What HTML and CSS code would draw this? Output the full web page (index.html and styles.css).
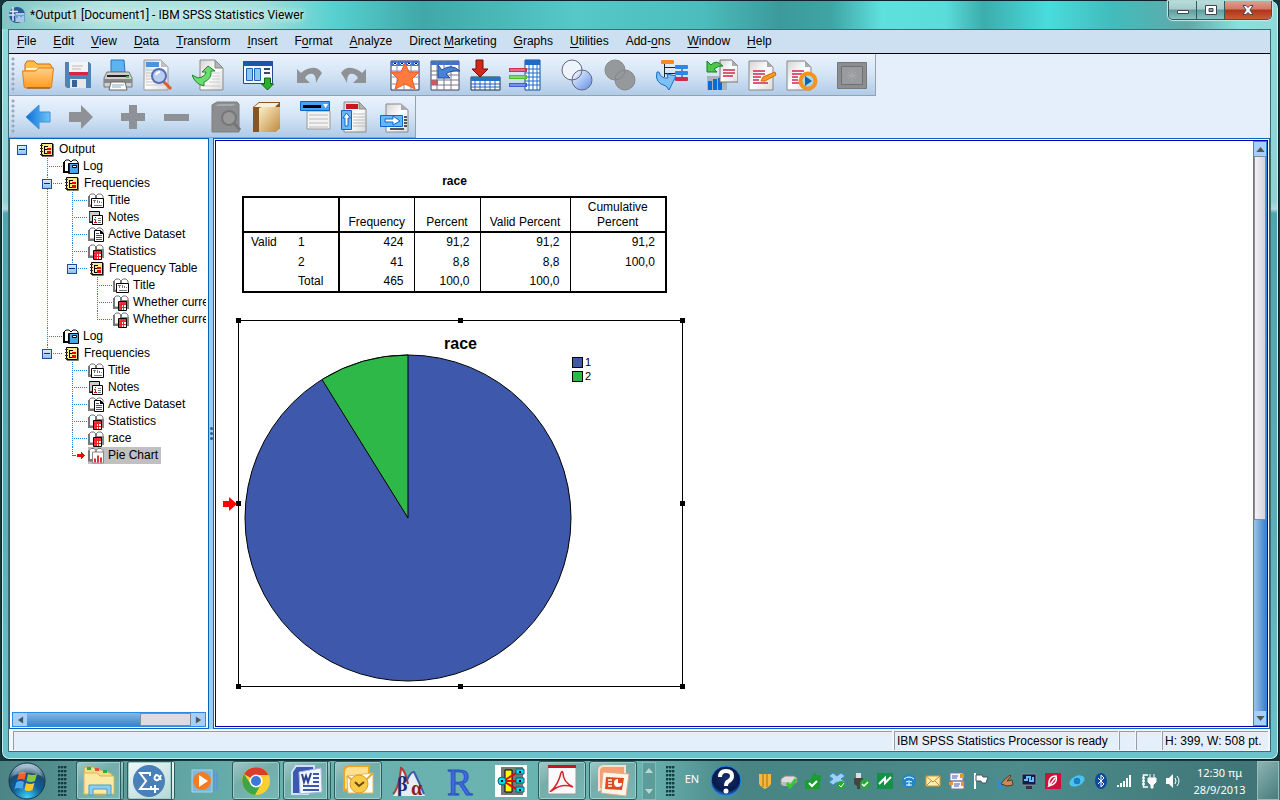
FILE: index.html
```html
<!DOCTYPE html>
<html lang="en">
<head>
    <meta charset="UTF-8">
    <meta name="viewport" content="width=device-width, initial-scale=1.0">
    <title>*Output1 [Document1] - IBM SPSS Statistics Viewer</title>
    <link rel="stylesheet" href="styles.css">
</head>
<body>
    <!-- shared gradients and outline icons -->
    <svg class="defs" width="0" height="0" aria-hidden="true">
        <defs>
            <linearGradient id="gOrange" x1="0" y1="0" x2="0" y2="1"><stop offset="0" stop-color="#ffd08a"/><stop offset="1" stop-color="#ff9a1e"/></linearGradient>
            <linearGradient id="gBlue" x1="0" y1="0" x2="1" y2="0"><stop offset="0" stop-color="#0a6fd8"/><stop offset="1" stop-color="#6fc4f5"/></linearGradient>
            <linearGradient id="gPage" x1="0" y1="0" x2="1" y2="1"><stop offset="0" stop-color="#d4d4d4"/><stop offset="0.5" stop-color="#fff"/><stop offset="1" stop-color="#d8d8d8"/></linearGradient>
            <linearGradient id="gLens" x1="0" y1="0" x2="1" y2="1"><stop offset="0" stop-color="#fff"/><stop offset="1" stop-color="#4f86e8"/></linearGradient>
            <linearGradient id="gBook" x1="0" y1="0" x2="1" y2="1"><stop offset="0" stop-color="#fbeec8"/><stop offset="1" stop-color="#c08a3c"/></linearGradient>
            <radialGradient id="gOrb" cx="0.5" cy="0.95" r="0.9"><stop offset="0" stop-color="#3fd0f8"/><stop offset="0.45" stop-color="#0f5f9a"/><stop offset="0.75" stop-color="#1a4a70"/><stop offset="1" stop-color="#a8c4d4"/></radialGradient>
            <radialGradient id="gHelp" cx="0.5" cy="0.4" r="0.6"><stop offset="0" stop-color="#16306a"/><stop offset="0.75" stop-color="#071a4a"/><stop offset="1" stop-color="#2a8ae8"/></radialGradient>
        </defs>
        <symbol id="page" viewBox="0 0 32 32">
            <path d="M5 1h15l7 7v23H5z" fill="url(#gPage)" stroke="#8a8a8a"/>
            <path d="M20 1v7h7z" fill="#b4b4b4" stroke="#8a8a8a"/>
        </symbol>
        <symbol id="t-out" viewBox="0 0 16 16">
            <path d="M2.500 1.500h11v12h-11z" fill="#ffe98a" stroke="#000"/>
            <path d="M14.500 2v12.500H3" stroke="#777" fill="none"/>
            <path d="M1 3.500h3M1 6.500h3M1 9.500h3M1 12.500h3" stroke="#333"/>
            <path d="M5 4h4v1H6v2h3v1H6v3h3v1H5z" fill="#000"/>
            <path d="M8 6h4v2H8zM8 9h4v3H8z" fill="#e00"/>
        </symbol>
        <symbol id="t-log" viewBox="0 0 16 16">
            <path d="M1 12V3l2-2h3l2 2 2-2h3l2 2v2" fill="#fff" stroke="#000"/>
            <path d="M1 3v10h4" stroke="#000" fill="none" stroke-width="2"/>
            <path d="M5.500 4.500h10v10h-10z" fill="#46a7e0" stroke="#000"/>
            <path d="M6 5h1v10H6z" fill="#125"/>
            <path d="M9.500 6.500h4v2h-4z" fill="#fff" stroke="#000"/>
        </symbol>
        <symbol id="book" viewBox="0 0 16 16">
            <path d="M1 12V3l2-2h3l2 2 2-2h3l2 2v9z" fill="#fff" stroke="#777"/>
            <path d="M1 3v10h5M8 3v5" stroke="#777" fill="none" stroke-width="2"/>
        </symbol>
        <symbol id="t-title" viewBox="0 0 16 16">
            <use href="#book" width="16" height="16"/>
            <path d="M3.500 5.500h12v9h-12z" fill="#fff" stroke="#000"/>
            <path d="M5 7.500h3M6.500 7v3M9.500 7v3M11.500 8v2M13 9.500h1M6 12.500h8" stroke="#777"/>
        </symbol>
        <symbol id="t-notes" viewBox="0 0 16 16">
            <path d="M1.500 1.500h10v11h-10z" fill="#ccc" stroke="#000"/>
            <path d="M1.500 2v10M1 11.500h4" stroke="#d00"/>
            <path d="M4.500 5.500h10v9h-10z" fill="#fff" stroke="#000"/>
            <path d="M7 7.500h1M6 9.500h1.500v3M6 12.500h3" stroke="#e00" fill="none"/>
            <path d="M10 8.500h3M10 10.500h3M10 12.500h3" stroke="#777"/>
        </symbol>
        <symbol id="t-data" viewBox="0 0 16 16">
            <use href="#book" width="16" height="16"/>
            <path d="M6.500 3.500h6l3 3v8h-9z" fill="#fff" stroke="#000"/>
            <path d="M12 3v4h4z" fill="#000"/>
            <path d="M8 6.500h3M8 8.500h6M8 10.500h6M8 12.500h6" stroke="#555"/>
        </symbol>
        <symbol id="t-stat" viewBox="0 0 16 16">
            <use href="#book" width="16" height="16"/>
            <path d="M9 5h7v9H9z" fill="#888"/>
            <path d="M5.500 6.500h8v9h-8z" fill="#fff" stroke="#000"/>
            <path d="M6 7h7v2H6zM6 7h2v8H6z" fill="#f33"/>
            <path d="M8.500 7v8M10.500 7v8M6 9.500h7M6 12.500h7" stroke="#e22"/>
        </symbol>
        <symbol id="t-pie" viewBox="0 0 16 16">
            <use href="#book" width="16" height="16"/>
            <path d="M4.500 4.500h11v11h-11z" fill="#fff" stroke="#888"/>
            <path d="M7 11v4M10 8v7M13 10v5" stroke="#d33" stroke-width="2"/>
        </symbol>
    </svg>

    <div class="window">
        <header class="titlebar">
            <svg class="app-icon" viewBox="0 0 16 16">
                <circle cx="8" cy="8" r="8" fill="#2a5a9c"/>
                <path d="M1 4.500h8M4 0v14M0 8h8" stroke="#dfe8f4" stroke-width="1.500"/>
                <path d="M6 6h10v9H6z" fill="#6f9ed4"/>
                <path d="M7 7h8M8 15v-4M10 15v-6M12 15v-5M14 15V9" stroke="#e8f0fa"/>
            </svg>
            <h1 class="title">*Output1 [Document1] - IBM SPSS Statistics Viewer</h1>
            <div class="captions">
                <button class="cap" aria-label="Minimize"><svg viewBox="0 0 14 12"><path d="M1.500 6.500h11v3h-11z" fill="#fff" stroke="#445"/></svg></button>
                <button class="cap" aria-label="Maximize"><svg viewBox="0 0 14 12"><path d="M1.500 1.500h11v9h-11zM5 4.500v3h4v-3z" fill="#fff" fill-rule="evenodd" stroke="#445"/></svg></button>
                <button class="cap close" aria-label="Close"><svg viewBox="0 0 14 12"><path d="M2 1.500h3l2 2 2-2h3L9 6l3 4.500H9l-2-2-2 2H2L5 6z" fill="#fff" stroke="#445"/></svg></button>
            </div>
        </header>

        <div class="client">
            <nav class="menubar">
                <button><u>F</u>ile</button>
                <button><u>E</u>dit</button>
                <button><u>V</u>iew</button>
                <button><u>D</u>ata</button>
                <button><u>T</u>ransform</button>
                <button><u>I</u>nsert</button>
                <button>F<u>o</u>rmat</button>
                <button><u>A</u>nalyze</button>
                <button>Direct <u>M</u>arketing</button>
                <button><u>G</u>raphs</button>
                <button><u>U</u>tilities</button>
                <button>Add-<u>o</u>ns</button>
                <button><u>W</u>indow</button>
                <button><u>H</u>elp</button>
            </nav>

            <div class="toolbars">
                <div class="toolbar">
                    <span class="grip"></span>
                    <div class="group">
                        <button aria-label="Open"><svg viewBox="0 0 32 32"><path d="M3 14V5l2-3h7l3 3h13l2 3v8H3z" fill="#ffbe4a" stroke="#d9641a"/><path d="M4 10h24" stroke="#fff3d0" stroke-width="2"/><path d="M0.500 12h13l3-3h15l-2 19q0 1-2 1H4q-2 0-2-2z" fill="url(#gOrange)" stroke="#e07a1a"/><path d="M5 29h23" stroke="#8a4a10"/></svg></button>
                        <button aria-label="Save"><svg viewBox="0 0 32 32"><path d="M3 3h24l2 2v24H5l-2-2z" fill="#4f82b8"/><path d="M7 3h19v13H7z" fill="#f3f3f3"/><path d="M10 7h11M10 10h9" stroke="#bbb"/><path d="M7 13h19v3H7z" fill="#d8234a"/><path d="M8 20h16v9H8z" fill="#e4e8ee"/><path d="M10 21h5v7h-5z" fill="#356294"/></svg></button>
                        <button aria-label="Print"><svg viewBox="0 0 32 32"><path d="M9 1h13l1 12H9z" fill="#5bb4f0" stroke="#2874c0"/><path d="M5 13h22l3 6v9H2v-9z" fill="#cfcfcf" stroke="#777"/><path d="M5 17h22" stroke="#222" stroke-width="2"/><path d="M2 20h28v4H2z" fill="#888"/><path d="M24 18h3" stroke="#3c3" stroke-width="2"/><path d="M9 23h14l2 8H7z" fill="#fff" stroke="#666"/><path d="M10 26h12M10 28h9" stroke="#8ab"/></svg></button>
                        <button aria-label="Print preview"><svg viewBox="0 0 32 32"><path d="M2 1h17l7 7v23H2z" fill="url(#gPage)" stroke="#999"/><path d="M19 1v7h7z" fill="#c0c0c0"/><path d="M4 3h13v5H4z" fill="#4a94dc"/><path d="M4 11h18M4 14h18M4 17h18M4 20h18M4 23h18M4 26h18" stroke="#c4c4c4"/><path d="M21 22l8 8" stroke="#e05a2a" stroke-width="3"/><circle cx="17" cy="17" r="7" fill="#b8cff0" stroke="#5c6cb4" stroke-width="2"/><path d="M14 16q1-3 4-3" stroke="#fff" stroke-width="2" fill="none"/></svg></button>
                    </div>
                    <div class="group"><button aria-label="Export"><svg viewBox="0 0 32 32"><path d="M8 1h15l8 8v22H8z" fill="url(#gPage)" stroke="#8a8a8a"/><path d="M23 1v8h8z" fill="#b4b4b4" stroke="#8a8a8a"/><path d="M20 14h8M20 17h8M20 20h8M17 23h11M12 27h16" stroke="#ccc"/><path d="M12 27Q3 25 0 16l6 3q7-1 8-6h-4l6-6 7 5h-4q1 8-7 11z" fill="#6fda6f" stroke="#158a2a"/></svg></button></div>
                    <div class="group"><button aria-label="Recall dialogs"><svg viewBox="0 0 32 32"><path d="M1.500 2.500h29v22h-29z" fill="#f6f9ff" stroke="#224a8c"/><path d="M1 2h30v5H1z" fill="#1a55b4"/><path d="M4.500 9.500h6v12h-6zM12.500 9.500h6v12h-6z" fill="#8cc8f4" stroke="#1f62b4"/><path d="M22 10h6M22 14h6" stroke="#446" stroke-width="2"/><path d="M22.500 19h6v6h3l-6 6-6-6h3z" fill="#2cb02c" stroke="#0c6a14"/></svg></button></div>
                    <div class="group wide">
                        <button aria-label="Undo"><svg viewBox="0 0 32 32"><path d="M3 10v14h13l-5-5q3-5 8-4 3 1 3 9 3-6 6-10-4-6-11-5-6 1-10 5z" fill="#8e9196"/></svg></button>
                        <button aria-label="Redo"><svg viewBox="0 0 32 32"><path d="M29 10v14H16l5-5q-3-5-8-4-3 1-3 9-3-6-6-10 4-6 11-5 6 1 10 5z" fill="#8e9196"/></svg></button>
                    </div>
                    <div class="group">
                        <button aria-label="Go to data"><svg viewBox="0 0 32 32"><path d="M2 2h28v29H2z" fill="#fff" stroke="#335"/><path d="M2 2h28v5H2z" fill="#3f6fd8"/><path d="M8 2v29M15 2v29M22 2v29M2 12h28M2 18h28M2 25h28" stroke="#88a"/><path d="M4 4l2 2 2-2M11 4l2 2 2-2M18 4l2 2 2-2M25 4l2 2 2-2" stroke="#fff"/><path d="M16 4l4 9h10l-7 7 3 10-10-5-10 5 3-10-7-7h10z" fill="#ff7a3c" stroke="#f05a1c"/></svg></button>
                        <button aria-label="Go to case"><svg viewBox="0 0 32 32"><path d="M2 2h28v29H2z" fill="#fff" stroke="#446"/><path d="M2 2h28v4H2z" fill="#3f6fd8"/><path d="M2 21h7v5H2z" fill="#f04a5a"/><path d="M8 2v29M15 2v29M22 2v29M2 12h28M2 16h28M2 21h28M2 26h28" stroke="#778"/><path d="M9 6v13h12l-4-4q5-4 14-3-9-8-18-1z" fill="#4a82d8" stroke="#1f4ca0"/></svg></button>
                        <button aria-label="Go to variable"><svg viewBox="0 0 32 32"><path d="M2 18h29v13H2z" fill="#fff" stroke="#134"/><path d="M2 18h29v4H2z" fill="#2a72c4"/><path d="M6 22v9M11 22v9M16 22v9M21 22v9M26 22v9M2 25h29M2 28h29" stroke="#1f62b4"/><path d="M7 1h7v9h5l-8 8-8-8h4z" fill="#d0281c" stroke="#7a0c08"/></svg></button>
                        <button aria-label="Variables"><svg viewBox="0 0 32 32"><path d="M16 1h15v30H16z" fill="#fff" stroke="#124a94"/><path d="M16 1h15v5H16z" fill="#1f6ac8"/><path d="M20 6v25M24 6v25M28 6v25M16 10h15M16 14h15M16 18h15M16 22h15M16 26h15" stroke="#1f6ac8"/><path d="M0 11h18" stroke="#d0304c" stroke-width="4"/><path d="M0 18h18" stroke="#54c028" stroke-width="4"/><path d="M0 26h18" stroke="#4060e0" stroke-width="4"/><path d="M1 11h15M1 18h15M1 26h15" stroke="#fff" opacity=".6"/></svg></button>
                    </div>
                    <div class="group wide">
                        <button aria-label="Select cases"><svg viewBox="0 0 32 32"><circle cx="11" cy="11" r="10" fill="#eef4fc" stroke="#667"/><circle cx="21" cy="21" r="10" fill="url(#gLens)" stroke="#668" fill-opacity=".9"/><path d="M11 21a10 10 0 0 0 10-10" stroke="#667" fill="none"/></svg></button>
                        <button aria-label="Select last output"><svg viewBox="0 0 32 32"><circle cx="11" cy="11" r="10" fill="#96999c" stroke="#888"/><circle cx="21" cy="21" r="10" fill="#96999c" stroke="#84878a"/><path d="M11 21a10 10 0 0 0 10-10" stroke="#84878a" fill="none"/></svg></button>
                    </div>
                    <div class="group"><button aria-label="Designate window"><svg viewBox="0 0 32 32"><path d="M8.500 5v13M8 8.500h11M8 14.500h11M26 8v12" stroke="#222"/><rect x="5" y="1" width="13" height="4" rx="1" fill="#f88a1c"/><rect x="19" y="6" width="13" height="4" rx="1" fill="#2a86ec"/><rect x="19" y="12" width="13" height="4" rx="1" fill="#2a86ec"/><rect x="19" y="18" width="13" height="4" rx="1" fill="#d02a4c"/><path d="M1 13q-3 11 9 14l3 4 7-14-9-2 1 4q-7 1-9-6z" fill="#7cc0f6" stroke="#1c6ec4"/></svg></button></div>
                    <div class="group near">
                        <button aria-label="Activate output"><svg viewBox="0 0 32 32"><path d="M1 17h20v14H1z" fill="#a9b4c0"/><path d="M4 31v-9M9 31V20M14 31V19" stroke="#0a6ad8" stroke-width="4"/><path d="M14 1h12l6 6v16H14z" fill="url(#gPage)" stroke="#777"/><path d="M26 1v6h6z" fill="#aaa"/><path d="M17 11h12M17 14h12M17 17h10" stroke="#d02a4c" stroke-width="1.500"/><path d="M1 2v11h10l-3-3q5-4 9-3-7-7-12-1z" fill="#4cc84c" stroke="#14821c"/></svg></button>
                        <button aria-label="Run script"><svg viewBox="0 0 32 32"><path d="M3 2h18l6 6v23H3z" fill="url(#gPage)" stroke="#888"/><path d="M21 2v6h6z" fill="#aaa"/><path d="M7 12h12M7 15h12M7 18h8M7 21h6M7 24h15" stroke="#d02a4c" stroke-width="1.500"/><path d="M15 22l2-4 12-5 1 3-11 6z" fill="#ff9a1c" stroke="#c86a08"/></svg></button>
                        <button aria-label="Run syntax"><svg viewBox="0 0 32 32"><path d="M1 2h18l6 6v23H1z" fill="url(#gPage)" stroke="#888"/><path d="M19 2v6h6z" fill="#aaa"/><path d="M6 12h12M6 15h10M6 18h6M6 21h6M6 24h8" stroke="#d02a4c" stroke-width="1.500"/><circle cx="22" cy="22" r="7.500" fill="#a8d8f0" stroke="#f4941c" stroke-width="4"/><path d="M19 17l7 5-7 5z" fill="#1464a8"/></svg></button>
                    </div>
                    <div class="group last"><button aria-label="Custom" disabled><svg viewBox="0 0 32 32"><path d="M1.500 3.500h29v26h-29z" fill="#8b8d90" stroke="#777"/><path d="M5.500 7.500h21v18h-21z" fill="#999b9e" stroke="#6e7072"/><path d="M16 11v11M11 16.500h10M12 13l8 7M20 13l-8 7" stroke="#aaa"/></svg></button></div>
                </div>

                <div class="toolbar">
                    <span class="grip"></span>
                    <div class="group wide start">
                        <button aria-label="Back"><svg viewBox="0 0 32 32"><path d="M4 16L17 4v7h11v10H17v7z" fill="url(#gBlue)" stroke="#3a90dc"/></svg></button>
                        <button aria-label="Forward"><svg viewBox="0 0 32 32"><path d="M28 16L16 4v7H4v10h12v7z" fill="#8e9196"/></svg></button>
                    </div>
                    <div class="group wide near">
                        <button aria-label="Expand"><svg viewBox="0 0 32 32"><path d="M12 4h8v8h8v8h-8v8h-8v-8H4v-8h8z" fill="#8e9196"/></svg></button>
                        <button aria-label="Collapse"><svg viewBox="0 0 32 32"><path d="M4 13h25v7H4z" fill="#8e9196"/></svg></button>
                    </div>
                    <div class="group near">
                        <button aria-label="Show"><svg viewBox="0 0 32 32"><path d="M1 4l5-3h20l2 2v28H1z" fill="#8b8d90" stroke="#7c7e80"/><path d="M4 5l3-2h18l-3 2z" fill="#a8a8a8"/><path d="M22 21l7 8" stroke="#777" stroke-width="3"/><circle cx="18" cy="17" r="7" fill="#999" stroke="#757779" stroke-width="2"/></svg></button>
                        <button aria-label="Hide"><svg viewBox="0 0 32 32"><path d="M2 6l6-5h21v26l-5 4H2z" fill="#8a5420"/><path d="M3 6l5-4h20l-4 4z" fill="#f4f0e0"/><path d="M8 7l3-1h18v21l-5 4H8z" fill="url(#gBook)"/></svg></button>
                    </div>
                    <div class="group">
                        <button aria-label="Insert heading"><svg viewBox="0 0 32 32"><path d="M8 10h23v18H8z" fill="#f2f2f2" stroke="#999"/><path d="M10 14h19M10 18h19M10 22h19M10 26h19" stroke="#bbb"/><path d="M1.500 0.500h29v9h-29z" fill="#4aa0f0" stroke="#0c64c8"/><path d="M4 5.500h18" stroke="#000" stroke-width="3"/><path d="M24 3h5l-2.500 4z" fill="#fff"/></svg></button>
                        <button aria-label="Insert title"><svg viewBox="0 0 32 32"><use href="#page" width="32" height="32"/><path d="M7 3h12v5H7z" fill="#c8181c"/><path d="M14 13h12M14 16h12M14 19h12M14 22h12M14 25h12" stroke="#bbb"/><path d="M2.500 9.500h10v19h-10z" fill="#68b6f6" stroke="#0c68d0"/><path d="M7.500 12l4 5H9v8H6v-8H4z" fill="#fff" stroke="#0c68d0"/></svg></button>
                        <button aria-label="Insert text"><svg viewBox="0 0 32 32"><path d="M7 3h15l7 6v22H7z" fill="url(#gPage)" stroke="#888"/><path d="M22 3v6h7z" fill="#aaa"/><path d="M11 28h14M25 16h3M25 19h3M25 22h3M25 25h3" stroke="#222" stroke-width="1.500"/><path d="M1.500 14.500h22v11h-22z" fill="#68b6f6" stroke="#0c68d0"/><path d="M6 18h8v-3l7 5-7 4v-3H6z" fill="#fff" stroke="#0c68d0"/></svg></button>
                    </div>
                </div>
            </div>

            <main class="panes">
                <aside class="outline">
                    <ul class="tree">
                        <li>
                            <div class="node"><button class="toggle" aria-label="Collapse"></button><svg class="ico"><use href="#t-out"/></svg><span>Output</span></div>
                            <ul>
                                <li><div class="node leaf"><svg class="ico"><use href="#t-log"/></svg><span>Log</span></div></li>
                                <li>
                                    <div class="node branch"><button class="toggle" aria-label="Collapse"></button><svg class="ico"><use href="#t-out"/></svg><span>Frequencies</span></div>
                                    <ul>
                                        <li><div class="node leaf"><svg class="ico"><use href="#t-title"/></svg><span>Title</span></div></li>
                                        <li><div class="node leaf"><svg class="ico"><use href="#t-notes"/></svg><span>Notes</span></div></li>
                                        <li><div class="node leaf"><svg class="ico"><use href="#t-data"/></svg><span>Active Dataset</span></div></li>
                                        <li><div class="node leaf"><svg class="ico"><use href="#t-stat"/></svg><span>Statistics</span></div></li>
                                        <li>
                                            <div class="node branch"><button class="toggle" aria-label="Collapse"></button><svg class="ico"><use href="#t-out"/></svg><span>Frequency Table</span></div>
                                            <ul>
                                                <li><div class="node leaf"><svg class="ico"><use href="#t-title"/></svg><span>Title</span></div></li>
                                                <li><div class="node leaf"><svg class="ico"><use href="#t-stat"/></svg><span>Whether curre</span></div></li>
                                                <li><div class="node leaf"><svg class="ico"><use href="#t-stat"/></svg><span>Whether curre</span></div></li>
                                            </ul>
                                        </li>
                                    </ul>
                                </li>
                                <li><div class="node leaf"><svg class="ico"><use href="#t-log"/></svg><span>Log</span></div></li>
                                <li>
                                    <div class="node branch"><button class="toggle" aria-label="Collapse"></button><svg class="ico"><use href="#t-out"/></svg><span>Frequencies</span></div>
                                    <ul>
                                        <li><div class="node leaf"><svg class="ico"><use href="#t-title"/></svg><span>Title</span></div></li>
                                        <li><div class="node leaf"><svg class="ico"><use href="#t-notes"/></svg><span>Notes</span></div></li>
                                        <li><div class="node leaf"><svg class="ico"><use href="#t-data"/></svg><span>Active Dataset</span></div></li>
                                        <li><div class="node leaf"><svg class="ico"><use href="#t-stat"/></svg><span>Statistics</span></div></li>
                                        <li><div class="node leaf"><svg class="ico"><use href="#t-stat"/></svg><span>race</span></div></li>
                                        <li><div class="node leaf current"><svg class="ico"><use href="#t-pie"/></svg><span>Pie Chart</span></div></li>
                                    </ul>
                                </li>
                            </ul>
                        </li>
                    </ul>
                    <div class="scroll horizontal">
                        <button aria-label="Scroll left"><svg viewBox="0 0 8 10"><path d="M7 1v8L1 5z" fill="#555"/></svg></button>
                        <span class="blue"></span><span class="pale"></span>
                        <button aria-label="Scroll right"><svg viewBox="0 0 8 10"><path d="M1 1v8l6-4z" fill="#555"/></svg></button>
                    </div>
                </aside>
                <div class="splitter"><i></i><i></i><i></i></div>
                <section class="viewer">
                    <div class="content">
                        <table class="pivot">
                            <caption>race</caption>
                            <thead>
                                <tr><th class="stub" colspan="2"></th><th>Frequency</th><th>Percent</th><th>Valid Percent</th><th>Cumulative<br>Percent</th></tr>
                            </thead>
                            <tbody>
                                <tr><th>Valid</th><th>1</th><td>424</td><td>91,2</td><td>91,2</td><td>91,2</td></tr>
                                <tr><th></th><th>2</th><td>41</td><td>8,8</td><td>8,8</td><td>100,0</td></tr>
                                <tr><th></th><th>Total</th><td>465</td><td>100,0</td><td>100,0</td><td></td></tr>
                            </tbody>
                        </table>

                        <figure class="chart">
                            <figcaption>race</figcaption>
                            <div class="plot">
                                <svg class="pie" viewBox="0 0 328 328">
                                    <circle cx="164" cy="164" r="163" fill="#3e58ab" stroke="#000"/>
                                    <path d="M164 164V1A163 163 0 0 0 78 25.500z" fill="#2eb848" stroke="#000"/>
                                </svg>
                                <ul class="legend">
                                    <li><span class="swatch one"></span>1</li>
                                    <li><span class="swatch two"></span>2</li>
                                </ul>
                            </div>
                            <i class="handle nw"></i><i class="handle n"></i><i class="handle ne"></i><i class="handle e"></i>
                            <i class="handle se"></i><i class="handle s"></i><i class="handle sw"></i><i class="handle w"></i>
                            <svg class="pointer" viewBox="0 0 14 14"><path d="M0 4h6V0l8 7-8 7v-4H0z" fill="#f00"/></svg>
                        </figure>
                    </div>
                    <div class="scroll vertical">
                        <button aria-label="Scroll up"><svg viewBox="0 0 10 6"><path d="M0 6h10L5 0z" fill="#555"/></svg></button>
                        <span class="pale"></span><span class="blue"></span>
                        <button aria-label="Scroll down"><svg viewBox="0 0 10 6"><path d="M0 0h10L5 6z" fill="#555"/></svg></button>
                    </div>
                </section>
            </main>

            <footer class="statusbar">
                <span class="cell grow"></span>
                <span class="cell message">IBM SPSS Statistics Processor is ready</span>
                <span class="cell blank"></span>
                <span class="cell blank wider"></span>
                <span class="cell size">H: 399, W: 508 pt.</span>
            </footer>
        </div>
    </div>

    <div class="taskbar">
        <button class="start-orb" aria-label="Start">
            <svg viewBox="0 0 38 38">
                <circle cx="19" cy="19" r="18" fill="url(#gOrb)" stroke="#16384c"/>
                <path d="M11 11q4-2 7 0l-1.500 7q-3-2-7.500 0z" fill="#f0622c"/>
                <path d="M20 12q4 2 9 0l-2 7q-4 2-8.500 0z" fill="#8cc63c"/>
                <path d="M8.500 20q4-2 7.500 0l-1.500 7q-4-2-8 0z" fill="#4aa8ec"/>
                <path d="M18 21q4 2 8.500 0l-2 7q-4 2-8 0z" fill="#fcc82c"/>
                <path d="M4 14a16 16 0 0 1 30 0q-15-6-30 0z" fill="#fff" opacity=".25"/>
            </svg>
        </button>
        <span class="dots"></span>
        <div class="apps">
            <button class="app open stack" aria-label="Explorer"><svg viewBox="0 0 36 34"><path d="M3 5l1-2h9l1 2 11 2 6 3v20H3z" fill="#f4dc84" stroke="#c8a848"/><path d="M6 3h4v3H6zM22 6h4v3h-4z" fill="#2cae3c"/><path d="M14 4h4v3h-4z" fill="#e0503c"/><path d="M3 9h13l3 3h14v18H3z" fill="#fbeaa4" stroke="#d4b85c"/><path d="M8 31V21h22v10h-4v-6H12v6z" fill="#8cd0ee" stroke="#4c9cc8"/></svg></button>
            <button class="app open active stack" aria-label="SPSS"><svg viewBox="0 0 36 34"><circle cx="17" cy="17" r="16" fill="#4a80b8"/><path d="M18 12V9H8l6 8-6 8h11v-3M23 21v8M19 25h8" stroke="#fff" stroke-width="2" fill="none"/><path d="M29 11q-2 6-5 5t0-5q3 0 5 5" stroke="#fff" stroke-width="2" fill="none"/></svg></button>
            <button class="app player" aria-label="Media Player"><svg viewBox="0 0 36 34"><path d="M6 6h20v22H6z" fill="#7cb8dc" stroke="#a8d4ec"/><path d="M28 7v20M31 8v18" stroke="#5c9cc8" stroke-width="2"/><circle cx="16" cy="17" r="9" fill="#f47c1c"/><path d="M13 11l9 6-9 6z" fill="#fff"/></svg></button>
            <button class="app open" aria-label="Chrome"><svg viewBox="0 0 36 34"><circle cx="18" cy="17" r="14" fill="#fcd02c"/><path d="M18 17L6 10a14 14 0 0 1 24.500 1H18z" fill="#dc3c2c"/><path d="M6 10a14 14 0 0 0 11 21l6-11-11-1z" fill="#3ca44c"/><circle cx="18" cy="17" r="6.500" fill="#fff"/><circle cx="18" cy="17" r="5" fill="#3c78d8"/></svg></button>
            <button class="app open stack" aria-label="Word"><svg viewBox="0 0 36 34"><path d="M8 2h18v8L20 30H4V8z" fill="#3c58b0" stroke="#cfe0fa" stroke-width="2"/><path d="M11 8l22-4 1 24-22 2z" fill="#f4f8fe" stroke="#a8b8dc"/><path d="M14 10l2 8 2-6 2 6 3-9" stroke="#2a4494" stroke-width="2" fill="none"/><path d="M25 10h6M25 14h6M25 18h6M15 22h16M15 26h16" stroke="#3c58b0" stroke-width="2"/></svg></button>
            <button class="app open" aria-label="Outlook"><svg viewBox="0 0 36 34"><path d="M4 26V8q0-5 5-6h20v20z" fill="#ffe090" stroke="#f4a41c" stroke-width="2"/><path d="M7 12l26-3v20H8z" fill="#fff" stroke="#e8b858"/><path d="M7 12l13 10L33 9" stroke="#e8a838" stroke-width="2" fill="none"/><circle cx="19" cy="20" r="9" fill="#f8cc48" stroke="#e09c1c"/><path d="M15 18l4 4 5-4" stroke="#6a4a10" stroke-width="2" fill="none"/></svg></button>
            <button class="app" aria-label="Beta alpha"><svg viewBox="0 0 36 34"><path d="M2 32Q8 26 10 4q4 2 6 14 4-10 7-10 3 6 11 24z" fill="#e8ecf4"/><path d="M2 30q6-6 8-26 4 2 7 16" stroke="#b03c3c" fill="none" stroke-width="2"/><path d="M16 16q4-9 7-8 4 8 10 22" stroke="#3c5ca4" fill="none" stroke-width="2"/><text class="greek beta" x="6" y="27">β</text><text class="greek alpha" x="20" y="31">α</text></svg></button>
            <button class="app" aria-label="R"><svg viewBox="0 0 36 34"><text class="letter" x="5" y="31">R</text></svg></button>
            <button class="app" aria-label="Amos"><svg viewBox="0 0 36 34"><path d="M2 1h32v32H2z" fill="#fff"/><path d="M8 3h22v28H8z" fill="#777"/><path d="M12 6h7v22h-7z" fill="#ff0" stroke="#000"/><path d="M10 17L25 8M10 17h15M10 17l15 9" stroke="#e00" stroke-width="2"/><circle cx="9" cy="17" r="4" fill="#0de" stroke="#067"/><path d="M23 5h8v5h-8zM23 14h8v5h-8zM23 23h8v5h-8z" fill="#0de" stroke="#067"/><path d="M27 7v2M27 16v2M27 25v2M9 16v2" stroke="#000" stroke-width="2"/></svg></button>
            <button class="app open" aria-label="Acrobat"><svg viewBox="0 0 36 34"><path d="M4 3h28v27H4z" fill="#fafafa" stroke="#999"/><path d="M4 1h28v3H4z" fill="#c8141c"/><path d="M7 27q7-6 10-18 1-3 2 0 0 9 10 14-11-4-20 3-4 2-2 1z" stroke="#d8242c" stroke-width="1.500" fill="none"/></svg></button>
            <button class="app open" aria-label="PowerPoint"><svg viewBox="0 0 36 34"><path d="M4 26V7q0-5 5-5h21v10z" fill="#f4a070" stroke="#ffe0cc" stroke-width="2"/><path d="M8 8l26 2-3 22-25-3z" fill="#fff4ec" stroke="#e8a888"/><path d="M11 13l18 1-2 12-17-1z" fill="#dc4c1c"/><circle cx="23" cy="19" r="4" fill="#fff"/><path d="M23 19v-4h4v4z" fill="#dc4c1c"/><path d="M13 16h4M13 19h4M13 22h4" stroke="#fff" stroke-width="1.500"/></svg></button>
        </div>
        <div class="stepper">
            <button aria-label="Scroll apps up"><svg viewBox="0 0 8 5"><path d="M0 5h8L4 0z" fill="#b8d8d6"/></svg></button>
            <button aria-label="Scroll apps down"><svg viewBox="0 0 8 5"><path d="M0 0h8L4 5z" fill="#b8d8d6"/></svg></button>
        </div>
        <span class="dots"></span>
        <button class="lang">EN</button>
        <button class="help" aria-label="Help"><svg viewBox="0 0 32 32"><circle cx="16" cy="16" r="15" fill="url(#gHelp)" stroke="#2a8ae8"/><path d="M10 12q0-6 6-6t6 5q0 3-3 5-3 1-3 5" stroke="#fff" stroke-width="4" fill="none"/><circle cx="16" cy="26" r="2.500" fill="#fff"/></svg></button>
        <div class="tray">
            <button aria-label="Shield"><svg viewBox="0 0 18 18"><path d="M3 2h12v9q0 3-6 6-6-3-6-6z" fill="#f4b83c"/><path d="M7 2v13M11 2v13" stroke="#a86c14"/></svg></button>
            <button aria-label="Printer"><svg viewBox="0 0 18 18"><path d="M1 7l4-3h9l3 2v4l-5 3H1z" fill="#ddd" stroke="#888"/><path d="M2 10h9v4H3z" fill="#bbb"/><path d="M7 11l3 4 6-8" stroke="#34c834" stroke-width="3" fill="none"/></svg></button>
            <button aria-label="Backup"><svg viewBox="0 0 18 18"><path d="M1 8h5l4-7h2v2h5v5l-1 1v8H1z" fill="#1c9c34"/><path d="M5 11l3 3 5-5" stroke="#fff" stroke-width="2" fill="none"/></svg></button>
            <button aria-label="Dropbox"><svg viewBox="0 0 18 18"><path d="M5 1L1 4l4 3-4 3 4 3 4-3 4 3 4-3-4-3 4-3-4-3-4 3z" fill="#9cd0f4" stroke="#3c90d0"/><circle cx="13" cy="13" r="4" fill="#28a838"/><path d="M11 13l2 2 3-4" stroke="#fff" fill="none"/></svg></button>
            <button aria-label="USB"><svg viewBox="0 0 18 18"><path d="M4 1h5v5H4z" fill="#ddd"/><path d="M2 6h9v6l-3 2v3H5v-3l-3-2z" fill="#444"/><circle cx="13" cy="12" r="5" fill="#28a838"/><path d="M10 12l2 2 4-4" stroke="#fff" stroke-width="1.500" fill="none"/></svg></button>
            <button aria-label="Monitor"><svg viewBox="0 0 18 18"><path d="M1 1h16v16H1z" fill="#149048"/><path d="M3 12l6-6v5l6-6" stroke="#fff" stroke-width="2" fill="none"/></svg></button>
            <button aria-label="Wireless"><svg viewBox="0 0 18 18"><circle cx="9" cy="9" r="7" fill="#2484c4"/><path d="M4 7q5-4 10 0M6 10q3-2 6 0M9 10v4M6 13h6" stroke="#fff" fill="none"/></svg></button>
            <button aria-label="Mail"><svg viewBox="0 0 18 18"><path d="M2 4h14v10H2z" fill="#fdeeb0" stroke="#e09830"/><path d="M2 4l7 6 7-6M2 14l5-5M16 14l-5-5" stroke="#d08820" fill="none"/></svg></button>
            <button aria-label="Contacts"><svg viewBox="0 0 18 18"><path d="M2 1h13v8H2zM3 9h13v8H3z" fill="#f8f8ff" stroke="#7878a0"/><path d="M4 4h6M4 6h5M6 12h6M6 14h5" stroke="#4458b0"/><path d="M12 2h4v4h-4zM13 10h3v4h-3zM1 10h4v3H1z" fill="#f09030"/></svg></button>
            <button aria-label="Action Center"><svg viewBox="0 0 18 18"><path d="M3 1v16" stroke="#fff" stroke-width="2"/><path d="M4 3h6l1 2h5l-2 6h-4l-1-2H4z" fill="#fff" stroke="#456"/></svg></button>
            <button aria-label="Pen"><svg viewBox="0 0 18 18"><path d="M1 9l6 7M7 9l-6 7M4 8v9" stroke="#2a90e0" stroke-width="1.500"/><path d="M5 12l3-4 6-5 1 1-4 5 5-1 1 5-6 1z" fill="#c88a5c" stroke="#5c3a20"/></svg></button>
            <button aria-label="Display"><svg viewBox="0 0 18 18"><path d="M2 2h14v11H2z" fill="#102040" stroke="#889"/><path d="M4 8h3V5h3v4h3V5" stroke="#6cb8f8" stroke-width="2" fill="none"/><path d="M6 14h6v3H6z" fill="#334"/></svg></button>
            <button aria-label="Avira"><svg viewBox="0 0 18 18"><path d="M1 1h16v16H1z" fill="#d01038"/><path d="M5 14q-1-10 7-10 2 8-7 10l6-8" stroke="#fff" stroke-width="1.500" fill="none"/></svg></button>
            <button aria-label="Eye"><svg viewBox="0 0 18 18"><ellipse cx="9" cy="9" rx="8" ry="5" transform="rotate(-25 9 9)" fill="#48c4f0"/><circle cx="9" cy="9" r="4" fill="#1880c8" stroke="#60c4ec"/></svg></button>
            <button aria-label="Bluetooth"><svg viewBox="0 0 18 18"><ellipse cx="9" cy="9" rx="6" ry="8" fill="#10489c"/><path d="M6 6l6 6-3 3V3l3 3-6 6" stroke="#fff" fill="none"/></svg></button>
            <button aria-label="Network"><svg viewBox="0 0 18 18"><path d="M2 13v2M5 11v4M8 9v6M11 6v9M14 3v12" stroke="#fff" stroke-width="2"/></svg></button>
            <button aria-label="Power"><svg viewBox="0 0 18 18"><path d="M8 3H3.500v12H8M2 6h3M2 9h3M2 12h3" stroke="#fff" fill="none" stroke-width="1.500"/><path d="M8 6h8v4l-3 3v3h-2v-3l-3-3zM10 2v4M14 2v4" fill="#fff" stroke="#fff"/></svg></button>
            <button aria-label="Volume"><svg viewBox="0 0 18 18"><path d="M2 6h3l4-4v14l-4-4H2z" fill="#fff"/><path d="M11 6q2 3 0 6M13 4q4 5 0 10" stroke="#fff" fill="none"/></svg></button>
        </div>
        <button class="clock"><span>12:30 πμ</span><span>28/9/2013</span></button>
        <button class="show-desktop" aria-label="Show desktop"></button>
    </div>
</body>
</html>
```
FILE: styles.css
```css
* { box-sizing: border-box; }
body {
    margin: 0;
    height: 100vh;
    display: flex;
    flex-direction: column;
    overflow: hidden;
    background-color: #16383c;
    color: #000;
    font: 12px/17px "Liberation Sans", Arial, sans-serif;
}
button { margin: 0; padding: 0; border: 0; background: none; color: inherit; font: inherit; }
ul { margin: 0; padding: 0; list-style: none; }
svg { display: block; }
.defs { position: absolute; }

/* window frame */
.window {
    flex: 1;
    min-height: 0;
    display: flex;
    flex-direction: column;
    margin: 0 1px;
    padding: 0 7px 7px 6px;
    border: 1px solid #0c2226;
    border-radius: 8px;
    background: linear-gradient(#8adcda, #8fd0d4 200px, #b6dadc 208px, #4fa5b0 212px, #5aaeb8 520px, #6cc2ca);
    box-shadow: inset 0 0 0 1px #c8eeee;
}
.titlebar {
    display: flex;
    align-items: center;
    gap: 5px;
    height: 28px;
    margin: 0 -6px;
    padding-left: 7px;
    border-radius: 7px 7px 0 0;
    background: linear-gradient(90deg, #7fc4c4, #b4e4e0 8%, #a4dfdc 20%, #58d0d0 26%, #40a8a8 33%, #56c8c8 45%, #4cbcbc 55%, #3c9a9c 61%, #3fa4a4 65%, #5ee0de 69%, #5adcda 74%, #3cacac 77%, #4adcdc 82%, #42bcbc 87%, #62a8a8 93%, #8ae0de 97%, #8fdad8);
}
.app-icon { width: 16px; height: 16px; }
.title {
    flex: 1;
    margin: 0;
    font: 12px/17px Roboto, "Open Sans", sans-serif;
    text-shadow: 0 0 6px #fff, 0 0 8px #d8f4f2;
}
.captions { display: flex; align-self: flex-start; margin-right: 5px; border: 1px solid #35595c; border-top: 0; border-radius: 0 0 5px 5px; overflow: hidden; box-shadow: 0 0 1px 1px #c4ecea; }
.cap { display: grid; place-items: center; width: 28px; height: 18px; background: linear-gradient(#b8dcda, #a4cccb 45%, #5f9c9c 50%, #86c4c2); border-right: 1px solid #35595c; }
.cap svg { width: 14px; height: 12px; }
.cap.close { width: 46px; border: 0; background: linear-gradient(#dca090, #cf7a68 45%, #b03418 50%, #cc5a38); }

.client {
    flex: 1;
    min-height: 0;
    display: flex;
    flex-direction: column;
    border: 1px solid #3a6e74;
    background-color: #e4effb;
}

/* menus and toolbars */
.menubar { display: flex; height: 24px; border-bottom: 1px solid #000; background-color: #cde0f1; }
.menubar button { padding: 0 9px 0 8px; }
.menubar u { text-underline-offset: 2px; }
.toolbars { display: flex; flex-direction: column; align-items: flex-start; }
.toolbar {
    display: flex;
    align-items: center;
    height: 42px;
    border: 1px solid #98a0a8;
    border-width: 0 1px 1px 0;
    background: linear-gradient(#eaf3fd, #d4e4f5 50%, #b0cbe7);
}
.grip { width: 9px; height: 36px; background: radial-gradient(circle at 4px 2px, #9aa8bc 1px, transparent 2px) 0 0 / 9px 5px; }
.group { display: flex; margin-right: 10px; }
.group.wide { gap: 3px; margin: 0 12px 0 2px; }
.group.start { margin-left: 0; margin-right: 10px; }
.group.near { margin-right: 8px; }
.group.wide.near { margin-right: 11px; }
.group.last { margin: 0 3px 0 2px; }
.group:last-child:not(.last) { margin-right: 0; }
.group button { display: grid; place-items: center; width: 40px; height: 40px; }
.group svg { width: 32px; height: 32px; }

/* outline pane */
.panes { flex: 1; min-height: 0; display: flex; }
.outline {
    display: flex;
    flex-direction: column;
    justify-content: space-between;
    flex: 0 0 200px;
    overflow: hidden;
    border: 1px solid #0a64b8;
    background-color: #fff;
    padding: 2px 2px 1px 0;
}
.tree { overflow: hidden; white-space: nowrap; }
.tree ul { padding-left: 25px; }
.tree ul > li { background: repeating-linear-gradient(#2a7cd0 0 1px, transparent 1px 2px) 12px 0 / 1px 100% no-repeat; }
.tree ul > li:last-child { background-size: 1px 9px; }
.node { display: flex; align-items: center; height: 17px; }
.node .ico { flex: none; width: 16px; height: 16px; margin-right: 4px; }
.leaf::before {
    content: "";
    flex: none;
    width: 16px;
    height: 1px;
    margin-left: 12px;
    background: repeating-linear-gradient(90deg, #2a7cd0 0 1px, transparent 1px 2px);
}
.toggle {
    flex: none;
    width: 10px;
    height: 10px;
    margin: 0 12px 0 7px;
    border: 1px solid #1c4c9c;
    background: linear-gradient(#0a2c74, #0a2c74) center / 6px 1px no-repeat, linear-gradient(#d8ecff, #8cc0f4);
}
.branch { background: repeating-linear-gradient(90deg, #2a7cd0 0 1px, transparent 1px 2px) 18px 8px / 9px 1px no-repeat; }
.node span { padding-right: 3px; }
.node.current::before { background: linear-gradient(#2a7cd0, #2a7cd0) 0 3px / 4px 1px no-repeat, conic-gradient(from 225deg at 100% 50%, #f00 90deg, transparent 0) 9px 0 / 4px 7px no-repeat, linear-gradient(#f00, #f00) 5px 2px / 5px 3px no-repeat; height: 7px; }
.node.current .ico, .node.current span { background-color: #c0c0c0; height: 17px; }
.node.current .ico { margin-right: 0; }
.node.current span { padding-left: 4px; }

/* scrollbars */
.scroll { display: flex; border: 1px solid #2a8ae8; }
.scroll button { display: grid; place-items: center; flex: none; background-color: #a6cffc; }
.scroll .pale { background: #dcdae4; border: 1px solid #8a8a92; }
.horizontal { height: 15px; margin-left: 2px; }
.horizontal button { width: 14px; }
.horizontal svg { width: 7px; height: 10px; }
.horizontal .blue { flex: 7; background: linear-gradient(#86b8e4, #3c80c8); }
.horizontal .pale { flex: 3; }
.vertical { flex: 0 0 14px; flex-direction: column; }
.vertical button { height: 14px; }
.vertical svg { width: 9px; height: 5px; }
.vertical .pale { flex: 655; background: linear-gradient(90deg, #f2f2f6, #d4d2dc); }
.vertical .blue { flex: 345; background: linear-gradient(90deg, #9cc4ec, #3c80c8); }

.splitter { display: flex; flex-direction: column; justify-content: center; align-items: center; gap: 2px; flex: 0 0 4px; background-color: #9cccfa; }
.splitter i { width: 3px; height: 3px; border-radius: 2px; background-color: #2a5a9c; }

/* viewer pane */
.viewer {
    flex: 1;
    min-width: 0;
    display: flex;
    border: 1px solid #0a64c8;
    outline: 1px solid #0000a0;
    outline-offset: -3px;
    background-color: #fff;
    padding: 2px;
}
.content { flex: 1; min-width: 0; overflow: hidden; padding: 33px 0 0 22px; }
.pivot { margin-left: 4px; border-collapse: collapse; border: 2px solid #000; line-height: 15px; }
.pivot caption { padding-bottom: 7px; font-weight: bold; }
.pivot th { font-weight: normal; text-align: left; padding: 0 12px 0 7px; }
.pivot td { height: 20px; padding: 0 10px; text-align: right; border-left: 1px solid #000; }
.pivot thead th { height: 35px; padding: 0 5px 1px; vertical-align: bottom; text-align: center; border: 1px solid #000; border-width: 0 1px 2px; }
.pivot thead th:nth-child(2), .pivot td:nth-child(3) { border-left-width: 2px; }
.pivot thead th:nth-child(2) { width: 75px; }
.pivot thead th:nth-child(3) { width: 66px; }
.pivot thead th:nth-child(4) { width: 90px; }
.pivot thead th:last-child { width: 96px; border-right-width: 2px; }
.pivot tbody th { width: 48px; }

.chart {
    position: relative;
    width: 445px;
    margin: 27px 0 0;
    padding: 14px 5px 4px;
    border: 1px solid #000;
}
.chart figcaption { font-size: 16px; line-height: 18px; font-weight: bold; text-align: center; }
.plot { display: flex; padding-top: 1px; }
.pie { width: 328px; height: 328px; }
.legend { padding-top: 1px; font-size: 11px; line-height: 14px; }
.legend li { display: flex; align-items: center; gap: 2px; }
.swatch { width: 11px; height: 11px; border: 1px solid #000; }
.swatch.one { background-color: #3e58ab; }
.swatch.two { background-color: #2eb848; }
.handle { position: absolute; width: 5px; height: 5px; margin: -3px; background-color: #000; }
.nw { left: 0; top: 0; } .n { left: 50%; top: 0; } .ne { right: 0; top: 0; } .e { right: 0; top: 50%; }
.se { right: 0; bottom: 0; } .s { left: 50%; bottom: 0; } .sw { left: 0; bottom: 0; } .w { left: 0; top: 50%; }
.pointer { position: absolute; right: 100%; top: 50%; width: 14px; height: 14px; margin: -7px 2px 0 0; }

/* status bar */
.statusbar { display: flex; height: 22px; padding: 2px 2px 1px 4px; background-color: #f2f7fd; }
.cell { height: 19px; padding: 1px 2px; border: 1px solid #989ca4; border-width: 1px 0 0 1px; background-color: #e4effb; }
.cell.grow { flex: 1; margin-right: 2px; }
.cell.message { width: 224px; margin-right: 1px; }
.cell.blank { width: 16px; margin-right: 1px; }
.cell.wider { width: 25px; }
.cell.size { width: 106px; }

/* taskbar */
.taskbar {
    display: flex;
    align-items: center;
    flex: 0 0 40px;
    padding: 0 1px 0 8px;
    border-top: 1px solid #143438;
    background: linear-gradient(90deg, #4c8484, #5a9898 8%, #68b0ae 20%, #6ab4b2 50%, #488484 58%, #4c8c8c 80%, #3f7274);
    color: #fff;
    font-family: "Noto Sans", "Open Sans", sans-serif;
}
.start-orb svg { width: 38px; height: 38px; }
.dots { flex: none; width: 9px; height: 30px; margin-left: 12px; background: radial-gradient(circle at 1px 1px, #163c40 1px, transparent 2px) 0 0 / 3px 4px; }
.apps { display: flex; gap: 3px; margin-left: 9px; }
.app { display: grid; place-items: center; width: 48px; height: 39px; border-radius: 3px; }
.app.player { width: 51px; }
.app.open { border: 1px solid #2c5e60; background: linear-gradient(150deg, #a0c8c6, #74aeab 40%, #74b8b4); box-shadow: inset 0 0 0 1px #a0ccca; }
.app.open.active { background: linear-gradient(150deg, #f0f8f8, #b4d8d6); }
.app.open.stack { border-right: 4px double #2c5e60; }
.app svg { width: 36px; height: 34px; }
.greek { font: bold 20px "Liberation Serif", serif; }
.beta { fill: #1c2c6c; }
.alpha { fill: #8c1c1c; }
.letter { font: 38px "Liberation Serif", serif; fill: #3c6ce0; stroke: #2c50c0; }
.stepper { display: flex; flex-direction: column; justify-content: space-between; align-items: center; width: 14px; height: 38px; margin-left: 5px; padding: 5px 0; border: 1px solid #86b8b6; background-color: #5c9c9a; }
.stepper svg { width: 8px; height: 5px; }
.stepper + .dots { margin-left: 10px; }
.lang { margin-left: 8px; width: 18px; font-size: 11px; padding-bottom: 4px; }
.help { margin-left: 9px; }
.help svg { width: 32px; height: 32px; }
.tray { display: flex; gap: 6px; margin-left: 14px; }
.tray svg { width: 18px; height: 18px; }
.clock { display: flex; flex-direction: column; align-items: center; flex: 1; font-size: 11px; white-space: nowrap; }
.show-desktop { align-self: stretch; width: 22px; border: 1px solid #94bcbc; background: linear-gradient(135deg, #8cb4b2, #487c7c); }
```
